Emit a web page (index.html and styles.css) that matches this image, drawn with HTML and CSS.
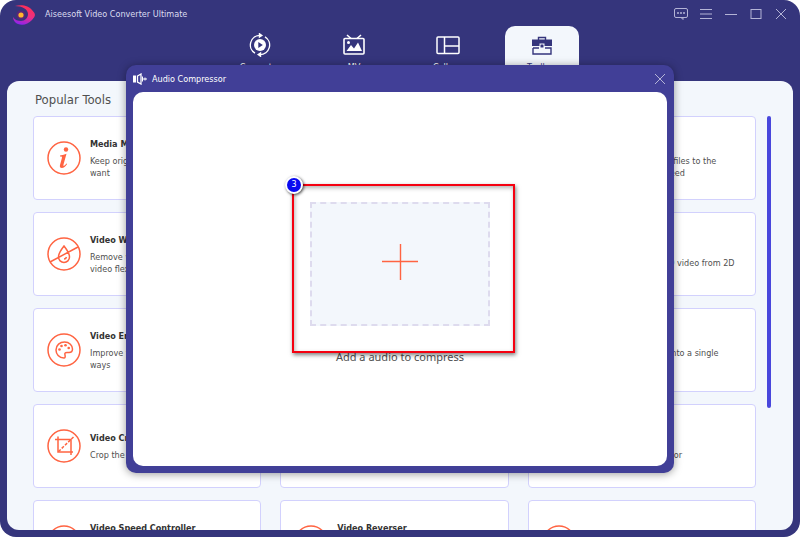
FILE: index.html
```html
<!doctype html>
<html lang="en">
  <head>
    <meta charset="UTF-8" />
    <meta name="viewport" content="width=device-width, initial-scale=1.0" />
    <title>Aiseesoft Video Converter Ultimate</title>
    <link rel="stylesheet" href="styles.css">
  </head>
  <body>
    <div class="window">
      <header class="titlebar">
        <svg class="logo" viewBox="0 0 22 20" aria-hidden="true">
          <defs>
            <linearGradient id="logo-fill" x1="0.6" y1="0" x2="0.3" y2="1">
              <stop offset="0" stop-color="#ff2f55" />
              <stop offset="0.5" stop-color="#ec2f80" />
              <stop offset="1" stop-color="#8a22f5" />
            </linearGradient>
          </defs>
          <path fill="url(#logo-fill)" d="M2 1C9-1 16 1 19 5q3 3 3 5 0 2-3 5C15 19 10 21 5 19 2 18 0 15 0 12c2 3 5 4 8 4 4 0 7-3 7-7C15 4 9 1 2 1Z" />
          <circle cx="8" cy="10" r="4.5" fill="#5b2577" />
          <circle cx="8" cy="10" r="2.6" fill="#ffb52e" />
        </svg>
        <h1>Aiseesoft Video Converter Ultimate</h1>
        <div class="window-controls">
          <button type="button" aria-label="Feedback">
            <svg viewBox="0 0 14 14"><rect x="0.5" y="1.5" width="13" height="9" rx="1.5" /><path d="M7 10.500 9 12.500V10.500" /><path d="M3 6h2M6 6h2M9 6h2" stroke-width="1.500" /></svg>
          </button>
          <button type="button" aria-label="Menu">
            <svg viewBox="0 0 14 14"><path d="M1 2.500h12M1 7h12M1 11.500h12" /></svg>
          </button>
          <button type="button" aria-label="Minimize">
            <svg viewBox="0 0 14 14"><path d="M1 7.500h12" /></svg>
          </button>
          <button type="button" aria-label="Maximize">
            <svg viewBox="0 0 14 14"><rect x="2" y="2.500" width="10" height="9" /></svg>
          </button>
          <button type="button" aria-label="Close">
            <svg viewBox="0 0 14 14"><path d="M2 2l10 10M12 2 2 12" /></svg>
          </button>
        </div>
      </header>

      <nav class="tabs">
        <a class="tab" href="#converter">
          <svg viewBox="0 0 24 24" fill="none" stroke="currentColor" stroke-width="1.400">
            <path d="M12 2.400A9.600 9.600 0 0 0 7 20.200M12 21.600A9.600 9.600 0 0 0 17 3.800" />
            <path d="M11.500 0.800 13.800 2.400 11.500 4ZM12.500 20 10.200 21.600 12.500 23.200Z" fill="currentColor" />
            <circle cx="12" cy="12" r="6" fill="currentColor" stroke="none" />
            <path d="M10.300 9 14.800 12l-4.500 3Z" fill="#35357c" stroke="none" />
          </svg>
          <span>Converter</span>
        </a>
        <a class="tab" href="#mv">
          <svg viewBox="0 0 24 24" fill="none" stroke="currentColor" stroke-width="1.600">
            <rect x="2" y="5.500" width="20" height="15.500" rx="1" />
            <path d="M5 2l4 3.500M19 2l-4 3.500" />
            <path d="M4.500 18 9 12l3 3.500L16 9.500l4 8.500Z" fill="currentColor" stroke="none" />
            <circle cx="6.500" cy="9.500" r="1.500" fill="currentColor" stroke="none" />
          </svg>
          <span>MV</span>
        </a>
        <a class="tab" href="#collage">
          <svg viewBox="0 0 24 24" fill="none" stroke="currentColor" stroke-width="1.500">
            <rect x="1" y="4" width="22" height="16.500" rx="1" />
            <path d="M8.500 4v16.500M8.500 13H23" />
          </svg>
          <span>Collage</span>
        </a>
        <a class="tab active" href="#toolbox" aria-current="page">
          <svg viewBox="0 0 24 24" fill="none" stroke="currentColor" stroke-width="1.400">
            <path d="M8.500 7V4.500h7V7" />
            <path d="M2 6.500h20V13h-7.500v-2.500h-5V13H2Z" fill="currentColor" stroke="none" />
            <rect x="10.500" y="11.500" width="3" height="3" rx="0.500" fill="currentColor" stroke="none" />
            <path d="M3 15v6h18v-6h-6M3 15h6" />
          </svg>
          <span>Toolbox</span>
        </a>
      </nav>

      <main class="panel">
        <h2>Popular Tools</h2>
        <div class="scroll-area">
          <div class="tool-grid">
            <a class="tool" href="#metadata">
              <svg viewBox="0 0 34 34">
                <circle cx="17" cy="17" r="16" />
                <circle class="solid" cx="19" cy="8.500" r="2.200" />
                <path class="solid" d="M13 14.500q4-.5 6.500-1.700l-3 10.700q-.4 1.700.6 1.300 1-.4 2.300-2.300l.7.500q-2.500 4-5.300 4-2.500-.1-1.800-3l1.900-7q.4-1.400-.5-1.600H13Z" />
              </svg>
              <div>
                <h3>Media Metadata Editor</h3>
                <p>Keep original file info or edit as you<br>want</p>
              </div>
            </a>
            <a class="tool" href="#compressor">
              <svg viewBox="0 0 34 34"><circle cx="17" cy="17" r="16" /><path d="M11 11h12v12H11Z" /></svg>
              <div>
                <h3>Video Compressor</h3>
                <p>Compress video files to the<br>proper file size you need</p>
              </div>
            </a>
            <a class="tool" href="#audio-compressor">
              <svg viewBox="0 0 34 34"><circle cx="17" cy="17" r="16" /><path d="M10 14h4l5-4v14l-5-4h-4Z" /></svg>
              <div>
                <h3>Audio Compressor</h3>
                <p>Compress your audio files to the<br>proper file size you need</p>
              </div>
            </a>

            <a class="tool" href="#watermark">
              <svg viewBox="0 0 34 34">
                <circle cx="17" cy="17" r="16" />
                <path d="M17 9q-5.500 7-5.500 11a5.500 5.500 0 0 0 11 0Q22.500 16 17 9ZM3 25 31 10M17 22q2 0 2.500-2" />
              </svg>
              <div>
                <h3>Video Watermark Remover</h3>
                <p>Remove watermark from the<br>video flexibly</p>
              </div>
            </a>
            <a class="tool" href="#gif">
              <svg viewBox="0 0 34 34"><circle cx="17" cy="17" r="16" /><path d="M10 10h14v14H10Z" /></svg>
              <div>
                <h3>GIF Maker</h3>
                <p>Make customized GIF with your video</p>
              </div>
            </a>
            <a class="tool" href="#3d">
              <svg viewBox="0 0 34 34"><circle cx="17" cy="17" r="16" /><path d="M10 13h14v9H10Z" /></svg>
              <div>
                <h3>3D Maker</h3>
                <p>Create customized 3D video from 2D</p>
              </div>
            </a>

            <a class="tool" href="#enhancer">
              <svg viewBox="0 0 34 34">
                <circle cx="17" cy="17" r="16" />
                <path d="M17 25c-5 0-8-4-8-8 0-5 4-8 8.500-8 5 0 8 3.500 8 7 0 2-1 3.500-3.500 3.500h-2c-2 0-2.500 1-2 2.500.5 2 0 3-1 3Z" />
                <circle class="solid" cx="12.500" cy="16.500" r="1.300" />
                <circle class="solid" cx="14.500" cy="13" r="1.300" />
                <circle class="solid" cx="18.500" cy="12.300" r="1.300" />
                <circle class="solid" cx="21.700" cy="15" r="1.300" />
              </svg>
              <div>
                <h3>Video Enhancer</h3>
                <p>Improve your video quality in several<br>ways</p>
              </div>
            </a>
            <a class="tool" href="#trimmer">
              <svg viewBox="0 0 34 34"><circle cx="17" cy="17" r="16" /><path d="M10 10l14 14M24 10 10 24" /></svg>
              <div>
                <h3>Video Trimmer</h3>
                <p>Trim your video to the length you want</p>
              </div>
            </a>
            <a class="tool" href="#merger">
              <svg viewBox="0 0 34 34"><circle cx="17" cy="17" r="16" /><path d="M10 12h14v10H10Z" /></svg>
              <div>
                <h3>Video Merger</h3>
                <p>Merge multiple clips into a single<br>piece</p>
              </div>
            </a>

            <a class="tool" href="#cropper">
              <svg viewBox="0 0 34 34">
                <circle cx="17" cy="17" r="16" />
                <path d="M11 7.500V23h15M8 10.500h16V26" />
                <path d="M11.500 22.500 26.500 8" stroke-dasharray="3 1.500" />
              </svg>
              <div>
                <h3>Video Cropper</h3>
                <p>Crop the redundant area</p>
              </div>
            </a>
            <a class="tool" href="#watermark-add">
              <svg viewBox="0 0 34 34"><circle cx="17" cy="17" r="16" /></svg>
              <div>
                <h3>Video Watermark</h3>
                <p>Add watermark to video</p>
              </div>
            </a>
            <a class="tool" href="#color">
              <svg viewBox="0 0 34 34"><circle cx="17" cy="17" r="16" /></svg>
              <div>
                <h3>Color Correction</h3>
                <p>Correct your video color</p>
              </div>
            </a>

            <a class="tool" href="#speed">
              <svg viewBox="0 0 34 34"><circle cx="17" cy="17" r="16" /></svg>
              <div>
                <h3>Video Speed Controller</h3>
                <p>Speed up or slow down your<br>video at ease</p>
              </div>
            </a>
            <a class="tool" href="#reverser">
              <svg viewBox="0 0 34 34"><circle cx="17" cy="17" r="16" /></svg>
              <div>
                <h3>Video Reverser</h3>
                <p>Reverse video footage with a<br>few clicks</p>
              </div>
            </a>
            <a class="tool" href="#more" aria-label="More tools">
              <svg viewBox="0 0 34 34"><circle cx="17" cy="17" r="16" /></svg>
            </a>
          </div>
          <div class="scroll-track"><div class="scroll-thumb"></div></div>
        </div>
      </main>

      <div class="overlay">
        <section class="dialog" role="dialog" aria-labelledby="dialog-title">
          <header class="dialog-bar">
            <svg class="speaker" viewBox="0 0 14 12" aria-hidden="true">
              <path d="M0 2.500h3v7H0Z" fill="currentColor" />
              <path d="M4.500 3 8 1v10L4.500 9Z" fill="none" stroke="currentColor" stroke-width="1.300" />
              <path d="M9.500 3.500v5M9.500 6H14M12 4.500v3" fill="none" stroke="currentColor" />
            </svg>
            <h2 id="dialog-title">Audio Compressor</h2>
            <button type="button" aria-label="Close dialog">
              <svg viewBox="0 0 14 14"><path d="M2 2l10 10M12 2 2 12" /></svg>
            </button>
          </header>
          <div class="dialog-body">
            <div class="drop-area">
              <button class="drop-zone" type="button" aria-labelledby="drop-label">
                <svg viewBox="0 0 36 36"><path d="M18.500 0v36M0 17.500h36" /></svg>
              </button>
              <!-- step marker around the drop zone -->
              <div class="highlight"><span class="step">3</span></div>
            </div>
            <p id="drop-label">Add a audio to compress</p>
          </div>
        </section>
      </div>
    </div>
  </body>
</html>
```
FILE: styles.css
```css
:root {
  --frame: #35357c;
  --dialog: #413f97;
  --panel: #f3f7fc;
  --card-border: #d2d1fd;
  --accent: #ff6442;
  --text: #505050;
}

* {
  box-sizing: border-box;
}

body {
  margin: 0;
  background: #fff;
  font-family: "DejaVu Sans Condensed", "Noto Sans", sans-serif;
  font-size: 9px;
  line-height: 12px;
  color: var(--text);
}

h1,
h2,
h3,
p {
  margin: 0;
  font-weight: normal;
}

button {
  padding: 0;
  border: none;
  background: none;
  cursor: pointer;
}

a {
  color: inherit;
  text-decoration: none;
}

svg {
  display: block;
  flex: none;
}

.window {
  position: relative;
  display: flex;
  flex-direction: column;
  height: 100vh;
  padding: 0 7px 7px;
  background: var(--frame);
  border-radius: 16px;
  overflow: hidden;
}

/* Title bar */
.titlebar {
  display: flex;
  align-items: center;
  height: 26px;
  padding: 2px 5px 0 6px;
  color: #dcdcf0;
}

.logo {
  width: 22px;
  height: 20px;
  margin: 2px 10px 0 0;
}

.titlebar h1 {
  font-size: 9px;
}

.window-controls {
  display: flex;
  gap: 11px;
  margin-left: auto;
}

.window-controls svg,
.dialog-bar button svg {
  width: 14px;
  height: 14px;
  fill: none;
  stroke: #b4b4d6;
}

/* Tabs */
.tabs {
  display: flex;
  justify-content: center;
  gap: 20px;
  height: 55px;
  padding-left: 2px;
  color: #fff;
}

.tab {
  display: flex;
  flex-direction: column;
  align-items: center;
  gap: 4px;
  width: 74px;
  padding-top: 7px;
  border-radius: 10px 10px 0 0;
}

.tab svg {
  width: 24px;
  height: 24px;
}

.tab.active {
  background: var(--panel);
  color: var(--frame);
}

/* Tool list */
.panel {
  flex: 1;
  min-height: 0;
  padding: 12px 22px 0 26px;
  background: var(--panel);
  border-radius: 12px;
  overflow: hidden;
}

.panel h2 {
  padding-left: 2px;
  font-size: 13px;
  line-height: 14px;
}

.scroll-area {
  display: flex;
  gap: 11px;
  margin-top: 9px;
}

.tool-grid {
  flex: 1;
  display: grid;
  grid-template-columns: repeat(3, 1fr);
  grid-auto-rows: 84px;
  gap: 12px 19px;
}

.tool {
  display: flex;
  align-items: center;
  gap: 9px;
  padding: 0 13px;
  background: #fff;
  border: 1px solid var(--card-border);
  border-radius: 4px;
}

.tool svg {
  width: 34px;
  height: 34px;
  fill: none;
  stroke: var(--accent);
  stroke-width: 1.5;
}

.tool .solid {
  fill: var(--accent);
  stroke: none;
}

.tool h3 {
  margin-bottom: 4px;
  font-size: 9px;
  font-weight: bold;
  line-height: 14px;
  color: #333;
}

.scroll-thumb {
  width: 4px;
  height: 292px;
  background: #4947dc;
  border-radius: 2px;
}

/* Dialog */
.overlay {
  position: absolute;
  inset: 0;
  display: flex;
  padding: 65px 126px 64px;
}

.dialog {
  flex: 1;
  display: flex;
  flex-direction: column;
  padding: 0 7px 7px;
  background: var(--dialog);
  border-radius: 10px;
  box-shadow: 0 1px 9px rgba(0, 0, 0, 0.4);
}

.dialog-bar {
  display: flex;
  align-items: center;
  gap: 5px;
  height: 27px;
  color: #fff;
}

.dialog-bar h2 {
  font-size: 9px;
}

.dialog-bar button {
  margin-left: auto;
}

.speaker {
  width: 14px;
  height: 12px;
}

.dialog-body {
  flex: 1;
  display: flex;
  flex-direction: column;
  align-items: center;
  justify-content: center;
  gap: 23px;
  padding-top: 8px;
  background: #fff;
  border-radius: 10px;
}

.dialog-body p {
  font-family: "Noto Sans", sans-serif;
  font-size: 11px;
  line-height: 16px;
}

.drop-area {
  position: relative;
}

.drop-zone {
  display: flex;
  align-items: center;
  justify-content: center;
  width: 180px;
  height: 124px;
  padding-bottom: 4px;
  background: var(--panel);
  border: 2px dashed #dedbee;
}

.drop-zone svg {
  width: 36px;
  height: 36px;
  stroke: var(--accent);
  stroke-width: 1.4;
}

.highlight {
  position: absolute;
  inset: -18px -25px -27px -18px;
  border: 2px solid #f50010;
  box-shadow: 1px 2px 4px rgba(0, 0, 0, 0.5), inset 1px 2px 4px rgba(0, 0, 0, 0.3);
  pointer-events: none;
}

.step {
  position: absolute;
  top: -10px;
  left: -9px;
  width: 18px;
  height: 18px;
  background: #0a0af0;
  border: 2px solid #fff;
  border-radius: 50%;
  box-shadow: 1px 1px 3px rgba(0, 0, 0, 0.7);
  color: #fff;
  font-family: "DejaVu Sans", sans-serif;
  font-size: 8px;
  line-height: 14px;
  text-align: center;
}
```
